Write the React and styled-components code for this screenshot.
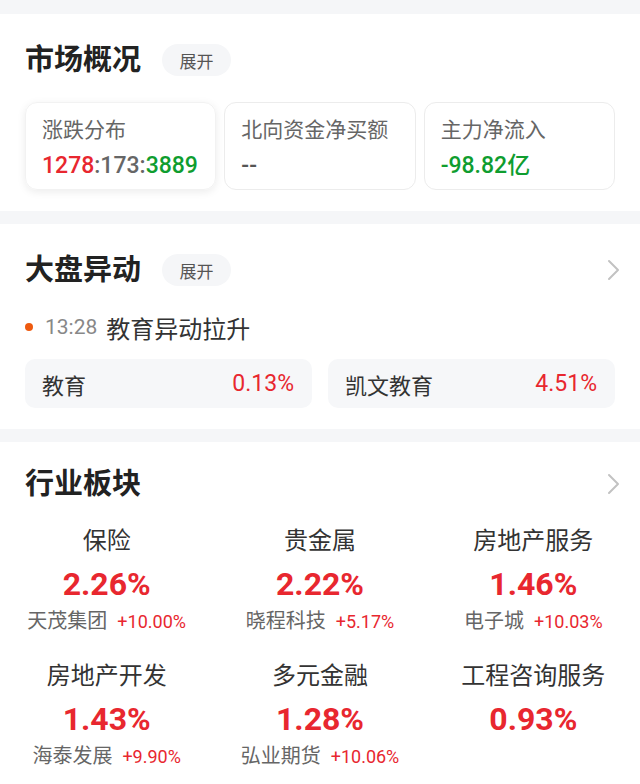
import React from "react";
import styled, { createGlobalStyle } from "styled-components";

const GlobalStyle = createGlobalStyle`
  html, body {
    margin: 0;
    padding: 0;
    background: #f5f6f8;
  }
  body {
    font-family: Roboto, "Noto Sans CJK SC", "Noto Sans", sans-serif;
    color: #222;
  }
`;

const Page = styled.div`
  width: 640px;
  padding-top: 14px;
  display: flex;
  flex-direction: column;
  gap: 13px;
  background: #f5f6f8;
`;

const Section = styled.section`
  background: #fff;
  padding: ${(p) => p.$pad || "28px 25px 21px"};
`;

const Header = styled.div`
  height: 36px;
  display: flex;
  align-items: center;
`;

const Title = styled.h2`
  margin: 0;
  font-size: 29px;
  line-height: 36px;
  font-weight: 700;
  color: #222;
`;

const Pill = styled.span`
  margin-left: 21px;
  width: 69px;
  height: 32px;
  border-radius: 16px;
  background: #f5f6f8;
  color: #555;
  font-size: 17px;
  display: flex;
  align-items: center;
  justify-content: center;
`;

const Chevron = styled.svg`
  margin-left: auto;
  margin-right: -5px;
`;

const Cards = styled.div`
  margin-top: 24px;
  display: grid;
  grid-template-columns: repeat(3, 1fr);
  gap: 8px;
`;

const Card = styled.div`
  box-sizing: border-box;
  height: 88px;
  border-radius: 12px;
  padding: 13px 16px 0;
  border: 1px solid ${(p) => (p.$active ? "#f2f2f2" : "#ececec")};
  box-shadow: ${(p) => (p.$active ? "0 2px 8px rgba(0,0,0,0.08)" : "none")};
`;

const CardLabel = styled.div`
  font-size: 21px;
  line-height: 28px;
  color: #666;
`;

const CardValue = styled.div`
  margin-top: 7px;
  font-size: 23px;
  line-height: 30px;
  font-weight: 500;
  color: ${(p) => p.$color || "#555"};
`;

const Red = styled.span`
  color: #e8272f;
`;
const Green = styled.span`
  color: #0f9d2f;
`;
const Gray = styled.span`
  color: #666;
`;

const NewsRow = styled.div`
  margin-top: 24px;
  height: 30px;
  display: flex;
  align-items: center;
`;

const Dot = styled.span`
  width: 8px;
  height: 8px;
  border-radius: 50%;
  background: #ee5a0f;
  margin-right: 12px;
`;

const Time = styled.span`
  font-size: 21px;
  color: #888;
  margin-right: 9px;
`;

const NewsText = styled.span`
  font-size: 24px;
  color: #333;
`;

const Chips = styled.div`
  margin-top: 17px;
  display: grid;
  grid-template-columns: 1fr 1fr;
  gap: 16px;
`;

const Chip = styled.div`
  height: 49px;
  border-radius: 10px;
  background: #f6f7f9;
  padding: 0 18px 0 17px;
  display: flex;
  align-items: center;
  justify-content: space-between;
  font-size: 22px;
  color: #333;
`;

const ChipPct = styled.span`
  font-size: 23px;
  color: #e8272f;
`;

const SectorHead = styled.div`
  padding: 0 25px;
`;

const SectorGrid = styled.div`
  margin-top: 23px;
  display: grid;
  grid-template-columns: repeat(3, 1fr);
  row-gap: 26px;
`;

const Sector = styled.div`
  display: flex;
  flex-direction: column;
  align-items: center;
`;

const SectorName = styled.div`
  font-size: 24px;
  line-height: 32px;
  color: #333;
`;

const SectorPct = styled.div`
  margin-top: 8px;
  font-size: 32px;
  line-height: 38px;
  font-weight: 700;
  color: #e8272f;
`;

const Leader = styled.div`
  margin-top: 5px;
  height: 26px;
  line-height: 26px;
  display: flex;
  align-items: baseline;
  gap: 10px;
`;

const LeaderName = styled.span`
  font-size: 20px;
  color: #666;
`;

const LeaderPct = styled.span`
  font-size: 18px;
  color: #e8272f;
`;

const ChevronIcon = () => (
  <Chevron width="14" height="22" viewBox="0 0 14 22">
    <polyline
      points="3,2 12,11 3,20"
      fill="none"
      stroke="#c2c2c2"
      strokeWidth="2"
      strokeLinecap="round"
      strokeLinejoin="round"
    />
  </Chevron>
);

const sectors = [
  { name: "保险", pct: "2.26%", lead: "天茂集团", leadPct: "+10.00%" },
  { name: "贵金属", pct: "2.22%", lead: "晓程科技", leadPct: "+5.17%" },
  { name: "房地产服务", pct: "1.46%", lead: "电子城", leadPct: "+10.03%" },
  { name: "房地产开发", pct: "1.43%", lead: "海泰发展", leadPct: "+9.90%" },
  { name: "多元金融", pct: "1.28%", lead: "弘业期货", leadPct: "+10.06%" },
  { name: "工程咨询服务", pct: "0.93%", lead: "", leadPct: "" },
];

export default function App() {
  return (
    <>
      <GlobalStyle />
      <Page>
        <Section>
          <Header>
            <Title>市场概况</Title>
            <Pill>展开</Pill>
          </Header>
          <Cards>
            <Card $active>
              <CardLabel>涨跌分布</CardLabel>
              <CardValue>
                <Red>1278</Red>
                <Gray>:173:</Gray>
                <Green>3889</Green>
              </CardValue>
            </Card>
            <Card>
              <CardLabel>北向资金净买额</CardLabel>
              <CardValue>--</CardValue>
            </Card>
            <Card>
              <CardLabel>主力净流入</CardLabel>
              <CardValue $color="#0f9d2f">-98.82亿</CardValue>
            </Card>
          </Cards>
        </Section>

        <Section>
          <Header>
            <Title>大盘异动</Title>
            <Pill>展开</Pill>
            <ChevronIcon />
          </Header>
          <NewsRow>
            <Dot />
            <Time>13:28</Time>
            <NewsText>教育异动拉升</NewsText>
          </NewsRow>
          <Chips>
            <Chip>
              <span>教育</span>
              <ChipPct>0.13%</ChipPct>
            </Chip>
            <Chip>
              <span>凯文教育</span>
              <ChipPct>4.51%</ChipPct>
            </Chip>
          </Chips>
        </Section>

        <Section $pad="24px 0 20px">
          <SectorHead>
            <Header>
              <Title>行业板块</Title>
              <ChevronIcon />
            </Header>
          </SectorHead>
          <SectorGrid>
            {sectors.map((s) => (
              <Sector key={s.name}>
                <SectorName>{s.name}</SectorName>
                <SectorPct>{s.pct}</SectorPct>
                <Leader>
                  <LeaderName>{s.lead}</LeaderName>
                  <LeaderPct>{s.leadPct}</LeaderPct>
                </Leader>
              </Sector>
            ))}
          </SectorGrid>
        </Section>
      </Page>
    </>
  );
}
